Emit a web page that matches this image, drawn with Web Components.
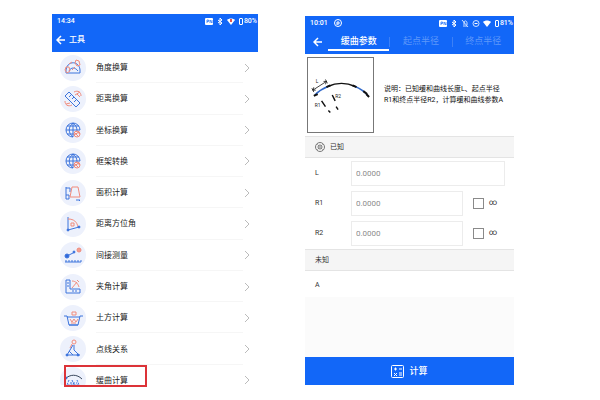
<!DOCTYPE html>
<html lang="zh-CN">
<head>
<meta charset="utf-8">
<meta name="viewport" content="width=device-width, initial-scale=1">
<title>工具</title>
<style>
  * { box-sizing: border-box }
  body {
    --blue: #1267f8;
    margin: 0; background: #fff; color: #333;
    font: 8px/12px Roboto, "Noto Sans CJK SC", sans-serif;
  }
  main { display: flex; gap: 47px; height: 100vh; padding: 14px 86px 15px 52px }
  tool-screen { flex: 206 1 0 }
  curve-screen { flex: 209 1 0; margin-top: 2px }
</style>
</head>
<body>
<main>
  <tool-screen></tool-screen>
  <curve-screen></curve-screen>
</main>

<script>
const define = (name, html, setup) => {
  const template = document.createElement('template');
  template.innerHTML = `<style>*{box-sizing:border-box} svg{display:block}</style>${html}`;
  customElements.define(name, class extends HTMLElement {
    constructor(){
      super();
      this.attachShadow({mode:'open'});
      this.shadowRoot.appendChild(template.content.cloneNode(true));
    }
    connectedCallback(){ if(setup) setup(this, this.shadowRoot); }
  });
};

// blue and red line icons, 26x26
const icons = {
  angle: '<path d="M6 18v-3c1-6 5-8 9-7 3 1 5 4 5 7v3zM9 16c2-4 6-4 9 0"/><path class="r" d="M9 9l3-2M16 5l3 1 1 4-3 1-2-3zM6 12l3 0 1 4-3 2-2-3zM12 15l3-3"/>',
  distance: '<path class="r" d="M14 6c4-2 7 0 7 4M17 8l3 3M15 9l5-3M5 15c0 4 3 6 7 4M6 18l4-1"/><path d="M9 6l11 11-4 4L5 10zM11 9l-2 2M14 11l-2 2M16 14l-2 2"/>',
  globe: '<path d="M13 20a7 7 0 1 1 7-7M6 13h14M7 9h12M13 6c-5 4-5 10 0 14M13 6c3 2 4 5 4 8M7 17h7M13 6v14"/><circle class="r" cx="17" cy="17" r="3"/><path class="r" d="M14 15l4 4M16 14l4 3M14 18l5-3"/>',
  area: '<path d="M6 7v12M6 8h4v4M6 15h3v4H6M16 20h4l-1 1"/><path class="r" d="M12 7h6l2 10H10z"/>',
  bearing: '<path d="M8 6v13l11-3"/><path class="r" d="M8 8c6 0 9 3 10 8M11 12h3v3h-3z"/><circle class="d" cx="8" cy="19" r="1"/><circle class="d" cx="19" cy="16" r="1"/>',
  measure: '<path d="M7 14l8-4M5 20h16M6 18v2M9 18v2M12 18v2M15 18v2M18 18v2M21 18v2"/><circle class="d" cx="7" cy="14" r="2"/><circle class="d" cx="14" cy="10" r="1"/><circle class="rd" cx="19" cy="8" r="2"/>',
  corner: '<path d="M6 6h4v9h10v4H6zM7 9h2M7 12h2M13 16v2M16 16v2"/><path class="r" d="M12 7c4 0 6 3 7 6M12 14l5-6M17 6l2 2"/>',
  earth: '<path d="M4 11h3l2 9h9l2-9h3M7 12h13M9 20h9"/><path class="r" d="M10 14l2 3 2-3 2 3 2-3M11 18h5M12 10V7h4v3z"/>',
  relation: '<path d="M13 9L7 19h13M14 9v5l5 5M9 15l4 4"/><circle class="r" cx="14" cy="6" r="2"/><path class="r" d="M12 8l-2 4"/><circle class="d" cx="7" cy="19" r="1"/><circle class="d" cx="18" cy="19" r="1"/>',
  curve: '<path style="stroke:#38465c" d="M5 12c5-5 12-5 17 0"/><path stroke-dasharray="2 1" d="M9 13l-2 5h12l-2-5M12 13l2 5M10 16h7"/><circle class="d" cx="6" cy="11" r="1"/>'
};

// signals on the right of the status bar
const signals = {
  pn: '<rect width="8" height="7" y="1" rx="1"/><path stroke="#1267f8" fill="none" stroke-width=".7" d="M2 6V3h1.500v1.500H2M5 6V3l2 3V3"/>',
  bluetooth: '<path fill="none" stroke="#fff" d="M2 3l4 3-2 2V1l2 2-4 3"/>',
  mute: '<path fill="none" stroke="#fff" stroke-width=".8" d="M1 1l6 7M2 7h4M3 6V3c1-2 3-1 3 1v2"/>',
  dnd: '<circle cx="4" cy="4.500" r="3" fill="none" stroke="#fff" stroke-width=".8"/><path d="M2.500 4h3v1h-3z"/>',
  wifi: '<path d="M0 3c2-2 6-2 8 0L4 8z"/>',
  alert: '<path d="M0 3c2-2 6-2 8 0L4 8z"/><path fill="#e4574f" d="M3 2h2v3H3z"/>'
};

define('status-bar', `
  <style>
    :host { display: flex; align-items: center; height: 14px; padding: 0 1px 0 5px; color: #fff; font-size: 7px; font-weight: 500 }
    .signals { display: flex; align-items: center; gap: 2px; margin-left: auto }
    .signals svg { width: 9px; height: 9px; fill: #fff }
    .level { display: flex; align-items: center; gap: 1px; margin-left: 1px }
    .level i { width: 4px; height: 7px; border: 1px solid #fff; border-radius: 1px }
    slot { display: flex; align-items: center; gap: 6px }
  </style>
  <slot></slot>
  <div class="signals"><div class="level"><i></i><span></span></div></div>
`, (host, root) => {
  const level = root.querySelector('.level');
  host.getAttribute('signals').split(' ').forEach(name =>
    level.insertAdjacentHTML('beforebegin', `<svg viewBox="0 0 9 9" aria-hidden="true">${signals[name]}</svg>`));
  root.querySelector('span').textContent = host.getAttribute('level');
});

define('back-button', `
  <style>
    :host { display: block }
    button { display: block; padding: 0; border: 0; background: none }
    svg { width: 10px; height: 10px; fill: none; stroke: #fff; stroke-width: 1.5 }
  </style>
  <button type="button" aria-label="返回"><svg viewBox="0 0 10 10"><path d="M9 5H1M5 1L1 5l4 4"/></svg></button>
`);

define('tool-row', `
  <style>
    :host { display: block }
    button {
      display: flex; align-items: center; width: 100%; height: 100%; padding: 0 7px 0 8px;
      border: 0; background: none; font: inherit; color: inherit; text-align: left;
    }
    .icon { width: 26px; height: 26px; border-radius: 50%; background: #edf1fc; fill: none; stroke: #3d74dc; stroke-width: 1 }
    .icon .r { stroke: #f08b7c }
    .icon .d { fill: #2f68dc }
    .icon .rd { fill: #f0a092; stroke: #f08b7c }
    .label { display: flex; align-items: center; flex: 1; align-self: stretch; margin-left: 10px; padding-top: 2px; border-bottom: 1px solid #f6f6f6; color: #222 }
    .chevron { width: 8px; height: 10px; fill: none; stroke: #bbb }
  </style>
  <button type="button">
    <svg class="icon" viewBox="0 0 26 26" aria-hidden="true"></svg>
    <span class="label"><slot></slot></span>
    <svg class="chevron" viewBox="0 0 8 10" aria-hidden="true"><path d="M2 1l4 4-4 4"/></svg>
  </button>
`, (host, root) => { root.querySelector('.icon').innerHTML = icons[host.getAttribute('icon')]; });

define('tool-screen', `
  <style>
    :host { position: relative; display: flex; flex-direction: column; min-width: 0 }
    header { background: var(--blue); color: #fff }
    .title { display: flex; align-items: center; gap: 3px; height: 24px; padding: 0 4px }
    h1 { margin: 0; font: inherit; font-weight: 500 }
    .view { flex: 1; min-height: 0; overflow: hidden }
    .list { display: grid; grid-auto-rows: 1fr; height: 344px }
    /* frame over the last tool */
    .mark { position: absolute; left: 12px; bottom: -2px; width: 83px; height: 22px; border: 2px solid #dc3338 }
  </style>
  <header>
    <status-bar signals="pn bluetooth alert" level="80%">14:34</status-bar>
    <div class="title"><back-button></back-button><h1>工具</h1></div>
  </header>
  <div class="view"><div class="list">
    <tool-row icon="angle">角度换算</tool-row>
    <tool-row icon="distance">距离换算</tool-row>
    <tool-row icon="globe">坐标换算</tool-row>
    <tool-row icon="globe">框架转换</tool-row>
    <tool-row icon="area">面积计算</tool-row>
    <tool-row icon="bearing">距离方位角</tool-row>
    <tool-row icon="measure">间接测量</tool-row>
    <tool-row icon="corner">夹角计算</tool-row>
    <tool-row icon="earth">土方计算</tool-row>
    <tool-row icon="relation">点线关系</tool-row>
    <tool-row icon="curve">缓曲计算</tool-row>
  </div></div>
  <div class="mark"></div>
`);

define('section-band', `
  <style>
    :host { display: flex; align-items: center; gap: 5px; height: 22px; padding: 0 10px; background: #f5f5f5; border: solid #e4e4e4; border-width: 1px 0; font-size: 7px }
  </style>
  <slot></slot>
`);

define('param-field', `
  <style>
    :host { display: flex; align-items: center; height: 30px; padding: 0 9px 0 10px }
    .name { width: 36px; font-size: 7px }
    .text { flex: 1; min-width: 0; height: 25px; padding: 0 4px; border: 1px solid #ececec; border-radius: 0; background: #fff; font: inherit; outline: 0 }
    .text::placeholder { color: #8c8c8c; opacity: 1 }
    .inf { display: flex; align-items: center; gap: 5px; width: 42px; padding-left: 10px; font-size: 8px }
    .inf input { appearance: none; width: 11px; height: 11px; margin: 0; border: 1px solid #8a8a8a; background: #fff }
    .inf input:checked { background: var(--blue) }
  </style>
  <label class="name" for="value"></label>
  <input class="text" id="value" placeholder="0.0000" inputmode="decimal">
  <label class="inf"><input type="checkbox">∞</label>
`, (host, root) => {
  root.querySelector('.name').textContent = host.getAttribute('name');
  // no tick box for a length: drop it with its label
  if(!host.hasAttribute('infinite')) root.querySelector('.inf')?.remove();
});

define('curve-screen', `
  <style>
    :host { display: flex; flex-direction: column; min-width: 0; background: #fbfbfb }
    header { background: var(--blue) }
    .bar { display: flex; align-items: center; height: 24px; padding: 0 0 0 8px }
    nav { display: flex; flex: 1; align-self: stretch; margin-left: 5px }
    nav button {
      flex: 1; padding: 3px 0 0; border: 0; border-bottom: 2px solid transparent; margin-bottom: 3px;
      background: none; color: #5e97fa; font: inherit; font-size: 9px; white-space: nowrap;
    }
    nav i { align-self: center; width: 1px; height: 10px; background: #3c80f6 }
    nav button[aria-selected=true] { border-color: #fff; color: #fff; font-weight: 500 }
    .about { display: flex; align-items: center; gap: 10px; padding: 3px 2px; background: #fff }
    .about svg { flex: none; width: 67px; height: 76px; border: 1px solid #777 }
    p { margin: 0; font-size: 7px; line-height: 11px; color: #111; white-space: nowrap }
    .fields { padding-bottom: 1px; background: #fff }
    .result { display: block; height: 26px; padding: 8px 10px 0; background: #fff; font-size: 7px }
    .calc {
      display: flex; align-items: center; justify-content: center; gap: 5px; height: 28px; margin-top: auto;
      padding: 0; border: 0; background: var(--blue); color: #fff; font: inherit; font-size: 9px; font-weight: 500;
    }
  </style>
  <header>
    <status-bar signals="pn bluetooth mute dnd wifi" level="81%">10:01
      <svg width="8" height="8" viewBox="0 0 8 8" fill="none" stroke="#fff" aria-hidden="true"><circle cx="4" cy="4" r="3.500"/><path d="M3 6V3h2v2H3"/></svg>
    </status-bar>
    <div class="bar">
      <back-button></back-button>
      <nav role="tablist">
        <button type="button" role="tab" aria-selected="true">缓曲参数</button><i></i>
        <button type="button" role="tab" aria-selected="false">起点半径</button><i></i>
        <button type="button" role="tab" aria-selected="false">终点半径</button>
      </nav>
    </div>
  </header>
  <div class="about">
    <svg viewBox="0 0 67 76" fill="none" stroke="#111" role="img" aria-label="缓和曲线">
      <path stroke-width="1.500" d="M21 29c8-4 19-4 27 0"/>
      <path stroke="#3169c9" stroke-width="1.500" d="M7 38c4-4 9-7 14-9M48 29c5 2 10 5 14 10"/>
      <path stroke-width=".8" d="M5 33l14-9M4 31l2 4M18 22l2 4M5 33l1-3M5 33l3 0M19 24l-3 0M19 24l-1 3"/>
      <path stroke-width="2" d="M6 39l4-2M19 30l4-2M46 28l4 2M57 34l4 3M60 37l3 3"/>
      <path stroke-width="1.500" d="M14 44l4 6M21 54l2 2M25 38l3 6M29 50l2 3"/>
      <g fill="#222" stroke="none" font-size="5"><text x="7" y="50">R1</text><text x="28" y="41">R2</text><text x="8" y="26">L</text></g>
    </svg>
    <p>说明：已知缓和曲线长度L、起点半径<br>R1和终点半径R2，计算缓和曲线参数A</p>
  </div>
  <section-band>
    <svg width="10" height="10" viewBox="0 0 10 10" fill="none" stroke="#777" aria-hidden="true"><circle cx="5" cy="5" r="4.500"/><circle cx="5" cy="5" r="2"/><path stroke-width=".5" d="M2 2l6 6M8 2L2 8"/></svg>
    已知
  </section-band>
  <div class="fields">
    <param-field name="L"></param-field>
    <param-field name="R1" infinite></param-field>
    <param-field name="R2" infinite></param-field>
  </div>
  <section-band>未知</section-band>
  <output class="result">A</output>
  <button class="calc" type="button">
    <svg width="13" height="13" viewBox="0 0 13 13" fill="none" stroke="#fff" aria-hidden="true"><rect x=".5" y=".5" width="12" height="12" rx="1"/><path d="M3 4h3M4.500 2.500v3M8 4h3M3 8l3 3M6 8l-3 3M8 8h3M8 10h3"/></svg>
    计算
  </button>
`);
</script>
</body>
</html>
